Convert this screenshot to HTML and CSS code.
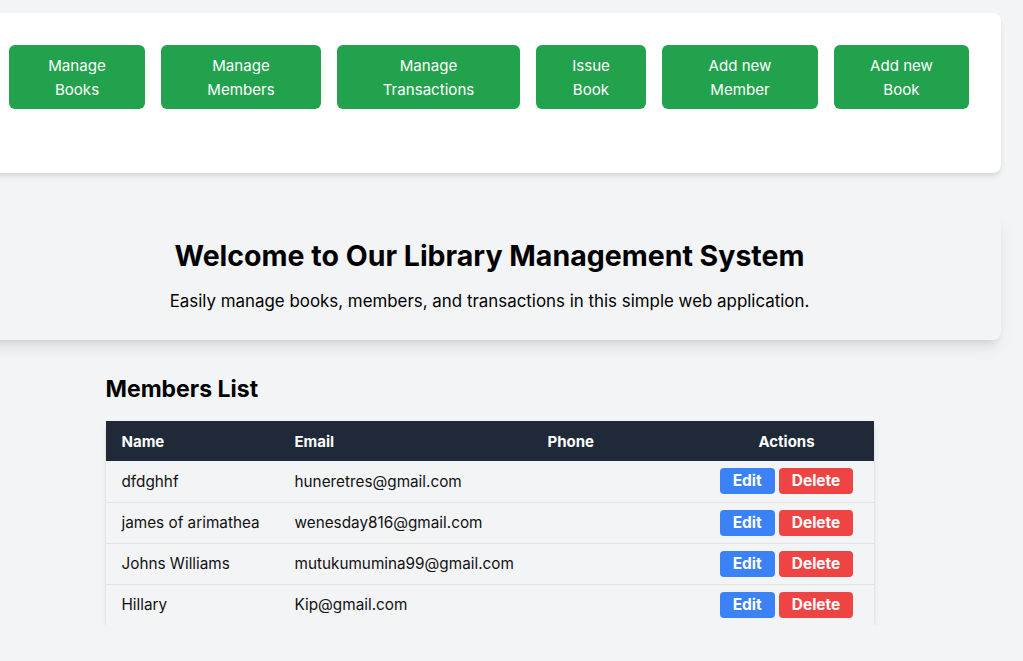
FILE: index.html
```html
<!DOCTYPE html>
<html lang="en">
<head>
<meta charset="utf-8">
<title>Library Management System</title>
<link rel="stylesheet" href="styles.css">
</head>
<body>
<div class="page">
  <nav class="nav-card">
    <a class="nav-btn w-books">Manage<br>Books</a>
    <a class="nav-btn w-members">Manage<br>Members</a>
    <a class="nav-btn w-trans">Manage<br>Transactions</a>
    <a class="nav-btn w-issue">Issue<br>Book</a>
    <a class="nav-btn w-addm">Add new<br>Member</a>
    <a class="nav-btn w-addb">Add new<br>Book</a>
  </nav>

  <section class="hero">
    <h1 class="hero-title">Welcome to Our Library Management System</h1>
    <p class="hero-text">Easily manage books, members, and transactions in this simple web application.</p>
  </section>

  <section class="members">
    <h2 class="members-title">Members List</h2>
    <div class="table-wrap">
      <table class="members-table">
        <colgroup>
          <col class="c-name"><col class="c-email"><col class="c-phone"><col class="c-actions">
        </colgroup>
        <thead>
          <tr><th>Name</th><th>Email</th><th>Phone</th><th class="center">Actions</th></tr>
        </thead>
        <tbody>
          <tr><td>dfdghhf</td><td>huneretres@gmail.com</td><td></td><td class="center"><button class="act edit">Edit</button><button class="act del">Delete</button></td></tr>
          <tr><td>james of arimathea</td><td>wenesday816@gmail.com</td><td></td><td class="center"><button class="act edit">Edit</button><button class="act del">Delete</button></td></tr>
          <tr><td>Johns Williams</td><td>mutukumumina99@gmail.com</td><td></td><td class="center"><button class="act edit">Edit</button><button class="act del">Delete</button></td></tr>
          <tr><td>Hillary</td><td>Kip@gmail.com</td><td></td><td class="center"><button class="act edit">Edit</button><button class="act del">Delete</button></td></tr>
        </tbody>
      </table>
    </div>
  </section>
</div>
</body>
</html>
```

FILE: styles.css
```css
html, body {
  margin: 0;
  padding: 0;
}
body {
  background: #f3f4f6;
  font-family: Inter, "Noto Sans", "DejaVu Sans", sans-serif;
  color: #111;
  overflow: hidden;
}
.page {
  width: 1023px;
  margin-left: -22px;
  padding-top: 13px;
}
.nav-card {
  background: #fff;
  border-radius: 8px;
  box-shadow: 0 4px 6px -1px rgba(0,0,0,0.1), 0 2px 4px -2px rgba(0,0,0,0.1);
  padding: 32px 31px 64px;
  display: flex;
  gap: 16px;
}
.nav-btn {
  display: block;
  background: #23a24d;
  color: #fff;
  border-radius: 6px;
  padding: 9px 0 7px;
  font-size: 15.1px;
  line-height: 24px;
  text-align: center;
  text-decoration: none;
}
.w-books { width: 136px; }
.w-members { width: 160px; }
.w-trans { width: 183px; }
.w-issue { width: 110px; }
.w-addm { width: 156px; }
.w-addb { width: 135px; }

.hero {
  margin-top: 38px;
  background: #f3f4f6;
  border-radius: 8px;
  box-shadow: 0 10px 15px -3px rgba(0,0,0,0.1), 0 4px 6px -4px rgba(0,0,0,0.1);
  padding: 27px;
  text-align: center;
}
.hero-title {
  margin: 0 0 15px;
  font-size: 28.5px;
  line-height: 36px;
  font-weight: 700;
  color: #000;
}
.hero-text {
  margin: 0;
  font-size: 16.9px;
  line-height: 24px;
  color: #000;
}

.members {
  width: 768px;
  margin: 33px auto 0;
}
.members-title {
  margin: 0 0 16px;
  font-size: 23px;
  line-height: 32px;
  font-weight: 700;
  color: #000;
}
.table-wrap {
  background: #f3f4f6;
  box-shadow: 0 4px 6px -1px rgba(0,0,0,0.12), 0 2px 4px -2px rgba(0,0,0,0.1);
}
.members-table {
  width: 100%;
  border-collapse: collapse;
  table-layout: fixed;
}
.c-name { width: 173px; }
.c-email { width: 253px; }
.c-phone { width: 168px; }
.c-actions { width: 174px; }
.members-table th {
  background: #1f2937;
  color: #fff;
  font-weight: 700;
  font-size: 15px;
  text-align: left;
  padding: 9px 16px 7px;
  line-height: 24px;
}
.members-table td {
  box-sizing: border-box;
  height: 41px;
  padding: 1px 16px 0;
  font-size: 15.3px;
  line-height: 24px;
  color: #111;
  white-space: nowrap;
  border-bottom: 1px solid #e1e3e6;
}
.members-table tbody tr:last-child td {
  border-bottom: none;
}
.members-table th.center,
.members-table td.center {
  text-align: center;
  padding-left: 0;
  padding-right: 0;
}
.members-table td.center {
  padding-top: 0;
}
.act {
  display: inline-block;
  vertical-align: middle;
  border: none;
  border-radius: 4px;
  color: #fff;
  font-family: inherit;
  font-size: 15.5px;
  font-weight: 700;
  line-height: 18px;
  padding: 4px 13px;
  margin: 0 2px;
}
.edit { background: #3b82f6; }
.del { background: #ef4444; }
```
